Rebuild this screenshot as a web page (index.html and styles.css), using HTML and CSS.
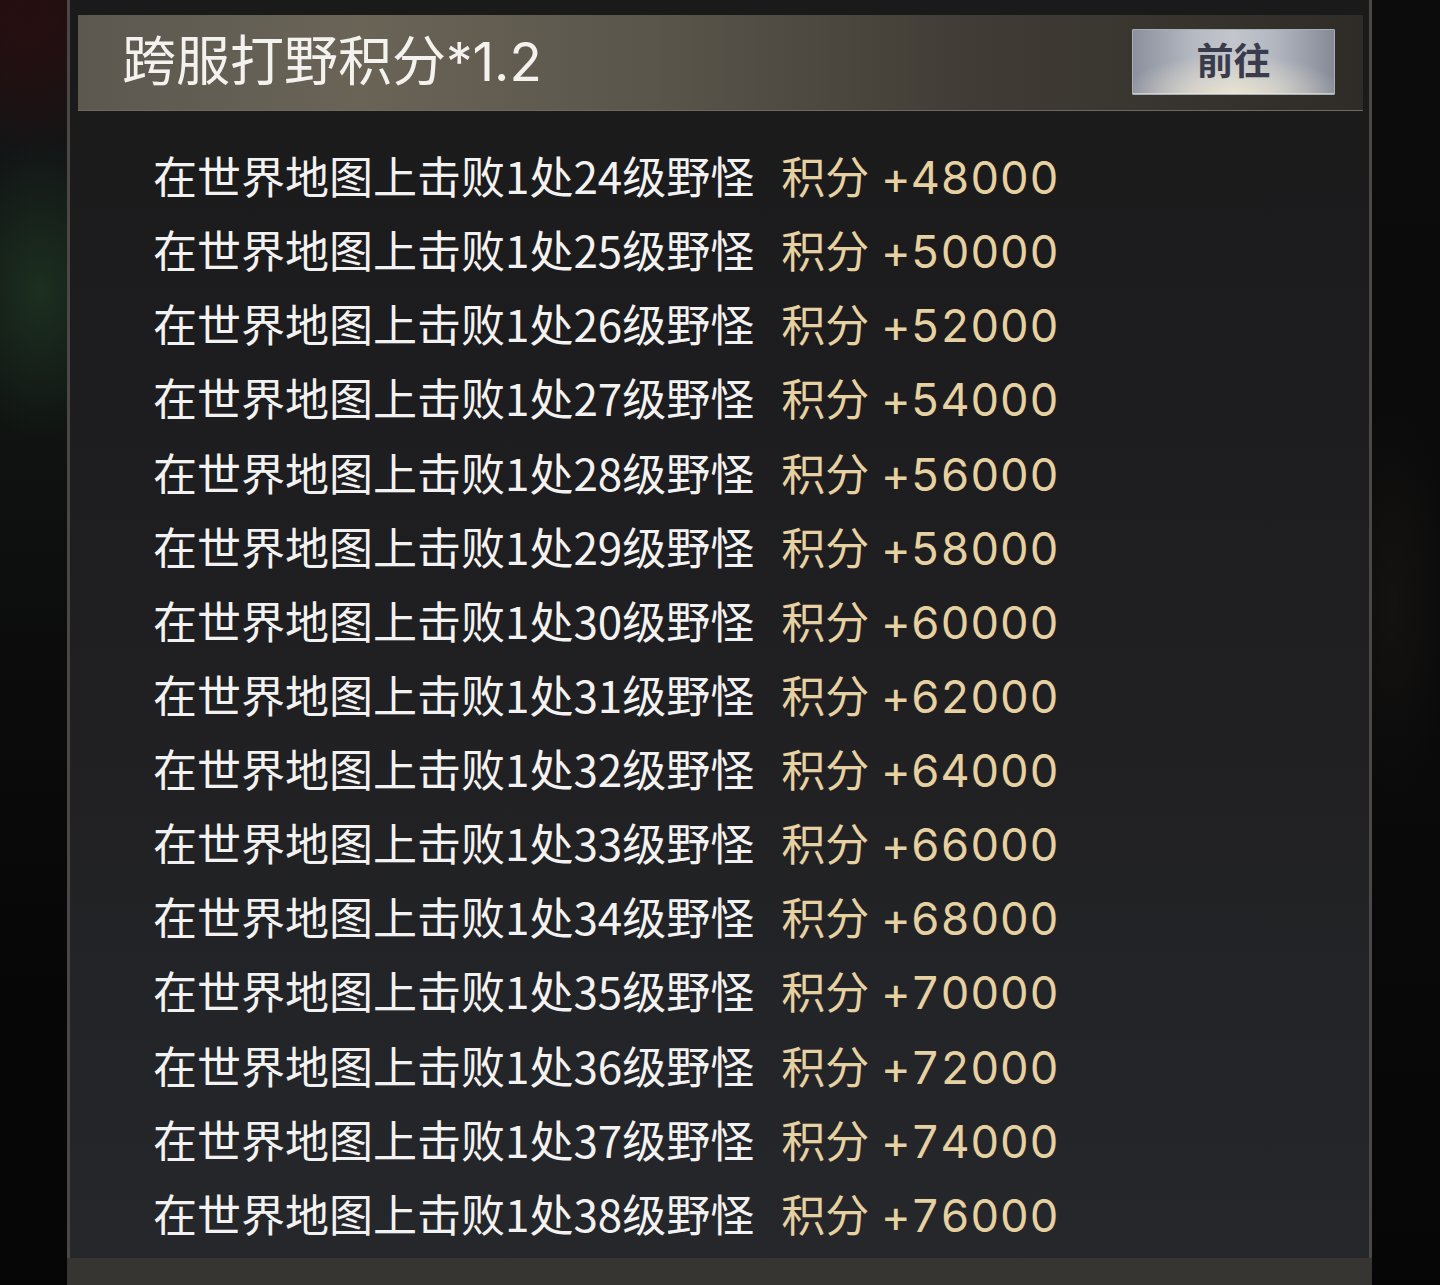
FILE: index.html
```html
<!DOCTYPE html>
<html lang="zh-CN">
<head>
<meta charset="utf-8">
<title>跨服打野积分</title>
<link rel="stylesheet" href="styles.css">
</head>
<body>
<div class="screen">
  <div class="side side-left"></div>
  <div class="panel">
    <div class="panel-body">
      <div class="header">
        <h1 class="title">跨服打野积分<span class="num">*1.2</span></h1>
        <button class="go-btn">前往</button>
      </div>
      <ul class="list">
        <li class="row"><span class="task">在世界地图上击败1处24级野怪</span><span class="score">积分 <span class="num">+48000</span></span></li>
        <li class="row"><span class="task">在世界地图上击败1处25级野怪</span><span class="score">积分 <span class="num">+50000</span></span></li>
        <li class="row"><span class="task">在世界地图上击败1处26级野怪</span><span class="score">积分 <span class="num">+52000</span></span></li>
        <li class="row"><span class="task">在世界地图上击败1处27级野怪</span><span class="score">积分 <span class="num">+54000</span></span></li>
        <li class="row"><span class="task">在世界地图上击败1处28级野怪</span><span class="score">积分 <span class="num">+56000</span></span></li>
        <li class="row"><span class="task">在世界地图上击败1处29级野怪</span><span class="score">积分 <span class="num">+58000</span></span></li>
        <li class="row"><span class="task">在世界地图上击败1处30级野怪</span><span class="score">积分 <span class="num">+60000</span></span></li>
        <li class="row"><span class="task">在世界地图上击败1处31级野怪</span><span class="score">积分 <span class="num">+62000</span></span></li>
        <li class="row"><span class="task">在世界地图上击败1处32级野怪</span><span class="score">积分 <span class="num">+64000</span></span></li>
        <li class="row"><span class="task">在世界地图上击败1处33级野怪</span><span class="score">积分 <span class="num">+66000</span></span></li>
        <li class="row"><span class="task">在世界地图上击败1处34级野怪</span><span class="score">积分 <span class="num">+68000</span></span></li>
        <li class="row"><span class="task">在世界地图上击败1处35级野怪</span><span class="score">积分 <span class="num">+70000</span></span></li>
        <li class="row"><span class="task">在世界地图上击败1处36级野怪</span><span class="score">积分 <span class="num">+72000</span></span></li>
        <li class="row"><span class="task">在世界地图上击败1处37级野怪</span><span class="score">积分 <span class="num">+74000</span></span></li>
        <li class="row"><span class="task">在世界地图上击败1处38级野怪</span><span class="score">积分 <span class="num">+76000</span></span></li>
      </ul>
    </div>
    <div class="panel-foot"></div>
  </div>
  <div class="side side-right"></div>
</div>
</body>
</html>
```

FILE: styles.css
```css
html, body {
  margin: 0;
  padding: 0;
  height: 100%;
  background: #070707;
  font-family: "Noto Sans CJK SC", "Noto Sans", sans-serif;
}

.screen {
  display: flex;
  height: 1285px;
  overflow: hidden;
}

.side {
  flex: 0 0 auto;
}

.side-left {
  width: 67px;
  background:
    radial-gradient(ellipse 90px 150px at 40px 290px, rgba(30, 52, 34, 0.85), rgba(20, 32, 24, 0) 100%),
    radial-gradient(ellipse 120px 140px at 30px 20px, rgba(40, 14, 16, 0.9), rgba(30, 12, 14, 0) 100%),
    linear-gradient(180deg, #1a1011 0px, #121516 150px, #101412 400px, #0c0c0d 650px, #060606 1000px);
}

.side-right {
  width: 68px;
  background:
    radial-gradient(ellipse 60px 200px at 20px 600px, rgba(28, 24, 20, 0.6), rgba(20, 18, 16, 0) 100%),
    linear-gradient(180deg, #0c0c0c 0%, #0a0a0b 60%, #060606 100%);
}

.panel {
  width: 1305px;
  height: 1285px;
  display: flex;
  flex-direction: column;
}

.panel-body {
  flex: 1 1 auto;
  min-height: 0;
  border-left: 3px solid #4b4745;
  border-right: 3px solid #4b4745;
  background: linear-gradient(180deg, #1b1a1b 0%, #1e1d1f 40%, #232427 80%, #26272b 100%);
  padding: 15px 6px 0 8px;
  display: flex;
  flex-direction: column;
  overflow: hidden;
}

.header {
  flex: 0 0 auto;
  height: 95px;
  border-bottom: 1px solid #6e695e;
  background: linear-gradient(90deg, #5c5850 0%, #6a6457 22%, #5a554b 45%, #403c35 70%, #2f2c27 100%);
  display: flex;
  align-items: center;
  justify-content: space-between;
  padding: 0 28px 0 44px;
}

.title {
  margin: -6px 0 0 0;
  font-size: 54px;
  font-weight: 400;
  color: #f4f2ee;
  line-height: 1;
  white-space: nowrap;
}

.title .num {
  font-family: "Inter", "Noto Sans CJK SC", sans-serif;
  font-size: 53px;
}

.go-btn {
  width: 203px;
  height: 66px;
  margin-top: -2px;
  border: 1px solid #a9adb5;
  border-radius: 1px;
  background:
    radial-gradient(ellipse 110px 40px at 50% 100%, rgba(236, 230, 210, 0.9), rgba(220, 220, 220, 0) 100%),
    linear-gradient(90deg, #8b909d 0%, #b5b9c2 30%, #c3c6cc 50%, #b3b7c0 70%, #858a97 100%);
  color: #3a3c4b;
  font-family: "Noto Sans CJK SC", sans-serif;
  font-size: 37px;
  font-weight: 700;
  line-height: 1;
  padding: 0 0 4px 0;
  box-shadow: inset 0 -1px 0 rgba(240, 235, 220, 0.6);
}

.list {
  list-style: none;
  margin: 0;
  padding: 27px 0 0 75px;
}

.row {
  height: 74.14px;
  line-height: 74.14px;
  font-size: 44px;
  white-space: nowrap;
}

.task {
  color: #f2f2f2;
}

.score {
  color: #e6d1a2;
  margin-left: 27px;
}

.score .num {
  font-family: "Inter", "Noto Sans CJK SC", sans-serif;
  font-variant-numeric: tabular-nums;
  font-size: 45px;
  letter-spacing: 0.5px;
  margin-left: 2px;
}

.panel-foot {
  flex: 0 0 27px;
  background: #373532;
}
```
